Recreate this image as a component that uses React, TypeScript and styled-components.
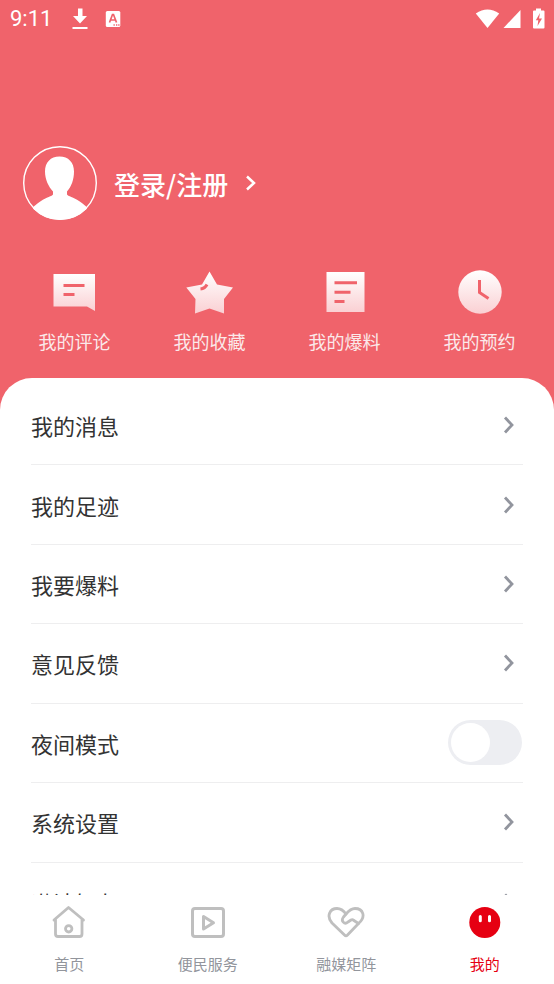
import React, { useState } from "react";
import styled, { createGlobalStyle } from "styled-components";

const coral = "#f0636b";
const red = "#e60012";
const cjk = `"Noto Sans CJK SC", sans-serif`;

const GlobalStyle = createGlobalStyle`
  * { box-sizing: border-box; }
  body { margin: 0; background: #fff; font-family: ${cjk}; }
  button, a { font: inherit; color: inherit; text-decoration: none; }
  button { border: 0; padding: 0; background: none; cursor: pointer; }
  ul { list-style: none; margin: 0; padding: 0; }
  svg { display: block; }
`;

const Screen = styled.div`
  display: flex;
  flex-direction: column;
  height: 100vh;
`;

const Scroller = styled.main`
  flex: 1;
  min-height: 0;
  overflow: hidden;
  background: ${coral};
`;

const StatusBar = styled.header`
  display: flex;
  align-items: center;
  justify-content: space-between;
  height: 38px;
  padding: 0 8px 0 10px;
  color: #fff;
`;

const StatusGroup = styled.div<{ $gap: number }>`
  display: flex;
  align-items: center;
  gap: ${(p) => p.$gap}px;
`;

const Clock = styled.time`
  font: 400 22px/24px Roboto, sans-serif;
  margin-right: 3px;
`;

const Profile = styled.button`
  display: flex;
  align-items: center;
  gap: 16px;
  margin: 107px 0 0 22px;
  color: #fff;
`;

const LoginText = styled.span`
  font: 500 26px/38px ${cjk};
  padding-top: 2px;
`;

const Shortcuts = styled.nav`
  display: grid;
  grid-template-columns: repeat(4, 1fr);
  padding: 48px 7px 23px;
`;

const Shortcut = styled.a`
  display: flex;
  flex-direction: column;
  align-items: center;
  gap: 12px;
  font-size: 18px;
  line-height: 28px;
  && { color: #fbe9ea; }
`;

const Panel = styled.section`
  padding: 8px 31px 0;
  border-radius: 32px 32px 0 0;
  background: #fff;
`;

const MenuList = styled.ul`
  display: grid;
  grid-auto-rows: 1fr;
  height: 556px;
`;

const MenuItem = styled.li`
  display: flex;
  border-bottom: 1px solid #eeeeef;
`;

const MenuLink = styled.a`
  flex: 1;
  display: flex;
  align-items: center;
  justify-content: space-between;
  padding-right: 8px;
  font-size: 22px;
  line-height: 32px;
  && { color: #333; }
`;

const ToggleRow = styled(MenuLink).attrs({ as: "label" })`
  padding-right: 1px;
`;

const Toggle = styled.input`
  appearance: none;
  display: flex;
  width: 74px;
  height: 45px;
  margin: 0;
  padding: 3px;
  border-radius: 23px;
  background: #edeef2;
  cursor: pointer;
  &::before {
    content: "";
    width: 39px;
    height: 39px;
    border-radius: 50%;
    background: #fff;
  }
  &:checked { background: ${red}; justify-content: flex-end; }
`;

const TabBar = styled.nav`
  display: grid;
  grid-template-columns: repeat(4, 1fr);
  padding: 8px 0 9px;
  background: #fff;
`;

const Tab = styled.a<{ $active?: boolean }>`
  display: flex;
  flex-direction: column;
  align-items: center;
  gap: 12px;
  font-size: 15px;
  line-height: 22px;
  && { color: ${(p) => (p.$active ? red : "#92959c")}; }
`;

const Chevron = () => (
  <svg width="12" height="18" viewBox="0 0 12 18" fill="none" stroke="#92959e" strokeWidth="2.8">
    <path d="M2 1.5 9 9 2 16.5" />
  </svg>
);

const Fade = ({ id }: { id: string }) => (
  <defs>
    <linearGradient id={id} x1="0" y1="0" x2="0" y2="1">
      <stop offset="0" stopColor="#fff" />
      <stop offset="1" stopColor="#fad0d3" />
    </linearGradient>
  </defs>
);

const CommentIcon = () => (
  <svg width="48" height="46" viewBox="0 0 48 46">
    <Fade id="comment" />
    <path fill="url(#comment)" d="M2.500 5H44v37l-8-4.500H2.500z" />
    <path stroke={coral} strokeWidth="3" d="M12.500 16.500h21M12.500 25.500h11" />
  </svg>
);

const StarIcon = () => (
  <svg width="48" height="46" viewBox="0 0 48 46">
    <Fade id="star" />
    <path fill="url(#star)" d="m23.500 2.500 7.500 13L47 18.500 38 30v14.500L23.500 39.500 9 44.500 9.500 30 .3 18.500l15.700-3z" />
    <path fill="none" stroke={coral} strokeWidth="3" d="M14.500 20q4.500-.5 6.500-4.500" />
  </svg>
);

const ReportIcon = () => (
  <svg width="48" height="46" viewBox="0 0 48 46">
    <Fade id="report" />
    <path fill="url(#report)" d="M5.500 3h38v40h-38z" />
    <path stroke={coral} strokeWidth="3" d="M13.500 13.700H36M13.500 23.200h16M13.500 32.500h10" />
  </svg>
);

const ClockIcon = () => (
  <svg width="48" height="46" viewBox="0 0 48 46">
    <Fade id="clock" />
    <circle cx="24" cy="23" r="21.700" fill="url(#clock)" />
    <path fill="none" stroke={coral} strokeWidth="3" d="M23.500 11v12.500l9 6" />
  </svg>
);

const Avatar = () => (
  <svg width="76" height="76" viewBox="0 0 76 76">
    <defs>
      <clipPath id="avatar"><circle cx="38" cy="38" r="37" /></clipPath>
    </defs>
    <circle cx="38" cy="38" r="36.300" fill="none" stroke="#fff" strokeWidth="1.400" />
    <path
      clipPath="url(#avatar)"
      fill="#fff"
      d="M37.500 11.500c9 0 14.500 6 14.500 15 0 8-2.500 15-7 20v3c.5 1.500 7 3 12 6.500 4 2.700 7.500 5.700 8 6.500v14H11V62.500c.5-.8 4-3.800 8-6.500 5-3.500 11.500-5 12-6.500v-3c-4.500-5-8-12-8-20 0-9 5.500-15 14.500-15z"
    />
  </svg>
);

const HomeIcon = () => (
  <svg width="38" height="38" viewBox="0 0 38 38" fill="none" stroke="#bfbfbf" strokeWidth="2.800" strokeLinecap="round" strokeLinejoin="round">
    <path d="M4 17 18.500 4.500 33.500 17M5.500 16v15q0 2.500 2.500 2.500h21.500q2.500 0 2.500-2.500V16" />
    <circle cx="18.700" cy="25.800" r="3.200" />
  </svg>
);

const VideoIcon = () => (
  <svg width="38" height="38" viewBox="0 0 38 38" fill="none" stroke="#bfbfbf" strokeWidth="3" strokeLinejoin="round">
    <rect x="3.500" y="5.500" width="31" height="28" rx="2.500" />
    <path d="M14.500 13.500V26l10-6.300z" />
  </svg>
);

const HeartIcon = () => (
  <svg width="38" height="38" viewBox="0 0 38 38" fill="none" stroke="#bfbfbf" strokeWidth="2.800" strokeLinecap="round" strokeLinejoin="round">
    <path d="M31.500 20.500 20.500 32q-1.500 1.500-3 0L5 20C-1 13 3 5.500 10 5.500c4 0 6.500 2 9 5.500" />
    <path d="M31.500 20.500c8-7 4.500-15-3.500-15-4 0-6.500 2.500-9 5.500l-2.500 3c-3 4 1 8 4.500 5l3-2q1.500-.8 2.500.3l5 3.200" />
  </svg>
);

const FaceIcon = () => (
  <svg width="38" height="38" viewBox="0 0 38 38">
    <circle cx="18.800" cy="19.500" r="15.500" fill={red} />
    <path stroke="#fff" strokeWidth="3" strokeLinecap="round" d="M14.300 13.500v4.200M23.500 13.500v4.200" />
  </svg>
);

const shortcuts = [
  { label: "我的评论", icon: <CommentIcon /> },
  { label: "我的收藏", icon: <StarIcon /> },
  { label: "我的爆料", icon: <ReportIcon /> },
  { label: "我的预约", icon: <ClockIcon /> },
];

const menu = ["我的消息", "我的足迹", "我要爆料", "意见反馈", "夜间模式", "系统设置", "邀请好友"];

const tabs = [
  { label: "首页", icon: <HomeIcon /> },
  { label: "便民服务", icon: <VideoIcon /> },
  { label: "融媒矩阵", icon: <HeartIcon /> },
  { label: "我的", icon: <FaceIcon />, active: true },
];

export default function App() {
  const [night, setNight] = useState(false);
  return (
    <Screen>
      <GlobalStyle />
      <Scroller>
        <StatusBar>
          <StatusGroup $gap={17}>
            <Clock>9:11</Clock>
            <svg width="16" height="22" viewBox="0 0 16 22" fill="#fff">
              <path d="M6 .5h4.500V8H15l-7 7.500L1 8h5zM.5 19h15v2H.5z" />
            </svg>
            <svg width="16" height="18" viewBox="0 0 16 18">
              <rect x=".8" y="1" width="14.500" height="16" rx="1.500" fill="#fff" />
              <path d="M4.500 12.500 7.500 4.500h1L11.500 12.500M5.500 10h5" fill="none" stroke={coral} strokeWidth="1.700" />
              <path d="M8.500 15h1.300M11 15h1.300M13.200 15h1.300" stroke={coral} strokeWidth="1.300" />
            </svg>
          </StatusGroup>
          <StatusGroup $gap={10}>
            <StatusGroup $gap={3}>
              <svg width="25" height="20" viewBox="0 0 25 20" fill="#fff">
                <path d="M.8 4.500q11.700-8 23.400 0L12.500 19z" />
              </svg>
              <svg width="18" height="20" viewBox="0 0 18 20" fill="#fff">
                <path d="M17.500 1v18H.5z" />
              </svg>
            </StatusGroup>
            <svg width="15" height="22" viewBox="0 0 15 22">
              <path d="M5 .5h5v2h2.500q1 0 1 1v16q0 1-1 1H3q-1 0-1-1v-16q0-1 1-1h2z" fill="#fff" />
              <path d="M9 5 4.800 12.200h2.500L6.500 18l4.500-7.500H8z" fill={coral} />
            </svg>
          </StatusGroup>
        </StatusBar>

        <Profile type="button">
          <Avatar />
          <LoginText>登录/注册</LoginText>
          <svg width="12" height="18" viewBox="0 0 12 18" fill="none" stroke="#fff" strokeWidth="2.500">
            <path d="M3 2.500 10 9 3 15.500" />
          </svg>
        </Profile>

        <Shortcuts>
          {shortcuts.map((s) => (
            <Shortcut href="#" key={s.label}>
              {s.icon}
              {s.label}
            </Shortcut>
          ))}
        </Shortcuts>

        <Panel>
          <MenuList>
            {menu.map((label) => (
              <MenuItem key={label}>
                {label === "夜间模式" ? (
                  <ToggleRow>
                    {label}
                    <Toggle type="checkbox" role="switch" checked={night} onChange={() => setNight(!night)} />
                  </ToggleRow>
                ) : (
                  <MenuLink href="#">
                    {label}
                    <Chevron />
                  </MenuLink>
                )}
              </MenuItem>
            ))}
          </MenuList>
        </Panel>
      </Scroller>

      <TabBar>
        {tabs.map((t) => (
          <Tab href="#" key={t.label} $active={t.active} aria-current={t.active ? "page" : undefined}>
            {t.icon}
            {t.label}
          </Tab>
        ))}
      </TabBar>
    </Screen>
  );
}
